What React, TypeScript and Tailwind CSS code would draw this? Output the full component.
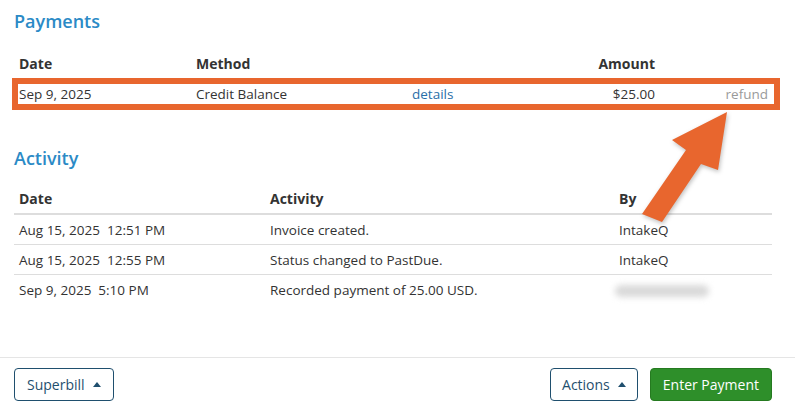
import React from "react";

const activity = [
  { date: "Aug 15, 2025  12:51 PM", text: "Invoice created.", by: "IntakeQ" },
  { date: "Aug 15, 2025  12:55 PM", text: "Status changed to PastDue.", by: "IntakeQ" },
  { date: "Sep 9, 2025  5:10 PM", text: "Recorded payment of 25.00 USD.", by: "" },
];

function Caret() {
  return (
    <svg width="8" height="5" viewBox="0 0 8 5" className="ml-[8px]">
      <path d="M0 5 L4 0 L8 5 Z" fill="currentColor" />
    </svg>
  );
}

export default function App() {
  return (
    <div
      className="relative flex h-[410px] w-[795px] flex-col overflow-hidden bg-white text-[13.5px] text-[#333]"
      style={{ fontFamily: '"Open Sans", "Liberation Sans", sans-serif' }}
    >
      <div className="flex-1 px-[14px]">
        {/* Payments */}
        <h2 className="pt-[9px] text-[18px] font-semibold leading-[24px] text-[#2b8ac6]">Payments</h2>
        <div className="mt-[15px] flex h-[30px] items-center pl-[5px] text-[14px] font-bold">
          <div className="w-[177px]">Date</div>
          <div className="w-[216px]">Method</div>
          <div className="w-[170px]" />
          <div className="w-[73px] text-right">Amount</div>
        </div>
        <div className="-ml-[2px] flex h-[32px] w-[768px] items-center border-[6px] border-[#e8662e] pl-[1px] pr-[6px] leading-[20px]">
          <div className="w-[177px]">Sep 9, 2025</div>
          <div className="w-[216px]">Credit Balance</div>
          <div className="w-[170px] text-[#2a6fa8]">details</div>
          <div className="w-[73px] text-right">$25.00</div>
          <div className="flex-1 text-right text-[#9a9a9a]">refund</div>
        </div>

        {/* Activity */}
        <h2 className="mt-[36px] text-[18px] font-semibold leading-[24px] text-[#2b8ac6]">Activity</h2>
        <div className="mt-[14px] w-[758px]">
          <div className="flex h-[31px] items-center border-b-2 border-[#ddd] pl-[5px] text-[14px] font-bold">
            <div className="w-[251px]">Date</div>
            <div className="w-[349px]">Activity</div>
            <div>By</div>
          </div>
          {activity.map((row, i) => (
            <div
              key={i}
              className={`flex h-[30px] items-center pl-[5px] pt-[1px] ${i < activity.length - 1 ? "border-b border-[#ddd]" : ""}`}
            >
              <div className="w-[251px] whitespace-pre">{row.date}</div>
              <div className="w-[349px]">{row.text}</div>
              <div>
                {row.by ? (
                  row.by
                ) : (
                  <div className="ml-[-4px] h-[12px] w-[94px] rounded-full bg-[#d9d9d9] blur-[3px]" />
                )}
              </div>
            </div>
          ))}
        </div>
      </div>

      {/* Footer */}
      <div className="flex items-center justify-between border-t border-[#e5e5e5] px-[14px] pt-[10px] pb-[9px]">
        <button className="flex h-[33px] items-center rounded-[4px] border border-[#1f4f6e] px-[12px] text-[14px] text-[#1f4f6e]">
          Superbill
          <Caret />
        </button>
        <div className="mr-[9px] flex items-center gap-[12px]">
          <button className="flex h-[33px] items-center rounded-[4px] border border-[#1f4f6e] px-[11px] text-[14px] text-[#1f4f6e]">
            Actions
            <Caret />
          </button>
          <button className="flex h-[33px] items-center rounded-[4px] border border-[#257a20] bg-[#2e8f2a] px-[12px] text-[14px] text-white">
            Enter Payment
          </button>
        </div>
      </div>

      {/* Annotation arrow */}
      <svg
        className="pointer-events-none absolute left-0 top-0"
        width="795"
        height="410"
        style={{ filter: "drop-shadow(1px 2px 2px rgba(0,0,0,0.25))" }}
      >
        <polygon
          points="727,112 718,170 701,164 662,222 642,214 686,150 672,140"
          fill="#e8662e"
        />
      </svg>
    </div>
  );
}
